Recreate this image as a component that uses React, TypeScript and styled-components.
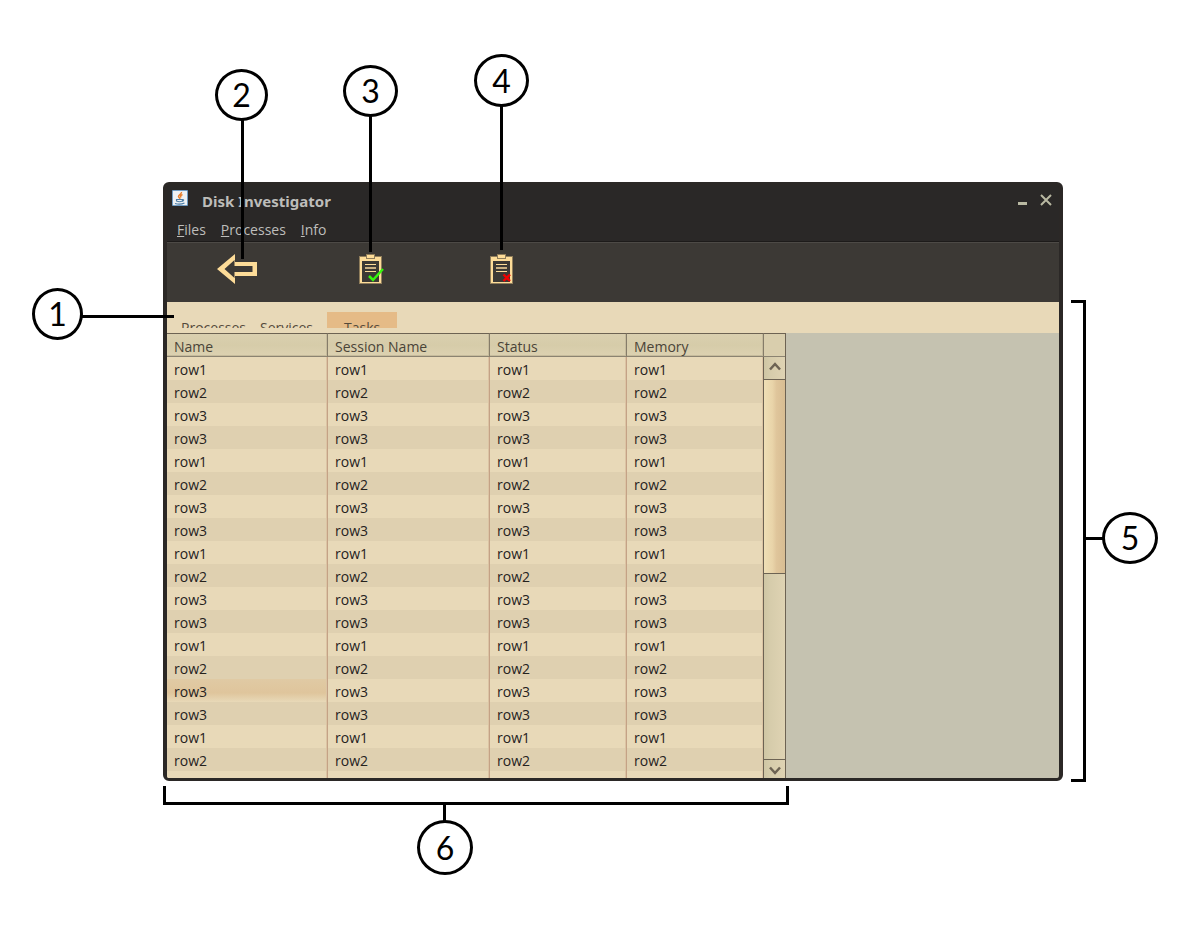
import React from "react";
import styled, { createGlobalStyle, css } from "styled-components";

const Global = createGlobalStyle`
  * { box-sizing: border-box; }
  body {
    margin: 0;
    background: #ffffff;
    font-family: "Open Sans", "Noto Sans", sans-serif;
    font-size: 14px;
    line-height: 20px;
  }
  button {
    margin: 0;
    padding: 0;
    border: 0;
    background: none;
    font: inherit;
    color: inherit;
  }
`;

const Stage = styled.main`
  padding: 182px 141px 167px 163px;
`;

const Figure = styled.div`
  position: relative;
`;

const Frame = styled.section`
  display: flex;
  flex-direction: column;
  border: 4px solid #2b2826;
  border-bottom-width: 3px;
  border-radius: 6px;
  background: #2b2826;
  overflow: hidden;
`;

const TitleBar = styled.header`
  display: flex;
  align-items: center;
  height: 32px;
  padding: 0 6px 0 5px;
  background: #2a2827;
`;

const Title = styled.h1`
  flex: 1;
  margin: 0 0 2px 14px;
  font-family: "Noto Sans", "Open Sans", sans-serif;
  font-size: 15px;
  line-height: 20px;
  font-weight: 700;
  color: #bdbdba;
`;

const JavaMark = styled.svg`
  width: 16px;
  height: 16px;
  margin-bottom: 8px;
`;

const WindowButtons = styled.div`
  display: flex;
  gap: 10px;
  margin-bottom: 4px;
`;

const WindowButton = styled.button`
  display: flex;
  width: 14px;
  height: 14px;
`;

const MenuBar = styled.nav`
  display: flex;
  gap: 15px;
  height: 24px;
  padding: 2px 10px;
  border-bottom: 1px solid #1d1b1a;
  background: #2a2827;
  color: #bebebb;
`;

const MenuButton = styled.button`
  height: 20px;
  line-height: 20px;
`;

const ToolBar = styled.div`
  display: flex;
  align-items: flex-start;
  gap: 102px;
  height: 60px;
  padding: 10px 50px;
  border-top: 1px solid #4d4a46;
  background: #3c3935;
`;

const ToolButton = styled.button`
  display: flex;
`;

const TabStrip = styled.div`
  display: flex;
  height: 31px;
  padding: 10px 7px 5px;
  background: #e8d9b8;
`;

const Tab = styled.button<{ $active?: boolean }>`
  height: 16px;
  padding: 6px 7px 0;
  overflow: hidden;
  line-height: 20px;
  color: #544a3b;
  ${(p) =>
    p.$active &&
    css`
      margin-left: 7px;
      padding: 6px 17px 0;
      background: #e5bb87;
    `}
`;

const Workspace = styled.div`
  display: flex;
  height: 445px;
  background: #c5c2b0;
`;

const TablePane = styled.div`
  flex: none;
  width: 597px;
  overflow: hidden;
  background: #e8d9b8;
`;

const Table = styled.table`
  width: 100%;
  table-layout: fixed;
  border-collapse: separate;
  border-spacing: 0;
`;

const HeadCell = styled.th`
  height: 24px;
  padding: 3px 7px 0;
  border-top: 1px solid #6d6353;
  border-bottom: 1px solid #8b8371;
  border-right: 1px solid #857c69;
  background: linear-gradient(#dacfaf, #d6cca9 50%, #dcd1b1);
  box-shadow: inset -1px -1px #c6bb9c;
  font-weight: 400;
  line-height: 19px;
  text-align: left;
  color: #4a4438;
`;

const Row = styled.tr`
  background: #e8d9b8;
  &:nth-child(even) {
    background: #dfd0b0;
  }
`;

const Cell = styled.td<{ $selected?: boolean }>`
  height: 23px;
  padding: 3px 7px 0;
  border-right: 1px solid #c4a286;
  box-shadow: inset -1px 0 #dcc4a4;
  line-height: 20px;
  color: #25221d;
  ${(p) =>
    p.$selected &&
    css`
      background: linear-gradient(#e0caa4, #dfc59c 60%, #e8d9b8);
    `}
`;

const ScrollColumn = styled.div`
  display: flex;
  flex-direction: column;
  width: 22px;
  border-top: 1px solid #6d6353;
  border-right: 1px solid #6d6353;
  background: #d9cead;
`;

const ScrollCorner = styled.div`
  height: 23px;
  border-bottom: 1px solid #8b8371;
`;

const ScrollBar = styled.div`
  flex: 1;
  display: flex;
  flex-direction: column;
  margin-left: -1px;
  border-left: 1px solid #6d6353;
  background: linear-gradient(to right, #cfc6a4, #d6ccab 30%, #dfd3b3);
`;

const ScrollButton = styled.button<{ $end?: boolean }>`
  display: flex;
  align-items: center;
  justify-content: center;
  height: ${(p) => (p.$end ? "19px" : "23px")};
  padding-top: ${(p) => (p.$end ? "3px" : "0")};
  padding-bottom: ${(p) => (p.$end ? "0" : "3px")};
  border-style: solid;
  border-color: #6d6353;
  border-width: ${(p) => (p.$end ? "1px 0 0" : "0 0 1px")};
`;

const ScrollThumb = styled.div`
  height: 194px;
  border-bottom: 1px solid #6d6353;
  background: linear-gradient(to right, #efdfb6, #e9d4a9 40%, #dfc59b 60%, #d8bd92);
`;

const ScrollTrack = styled.div`
  flex: 1;
`;

/* Numbered callouts lie over the window and are anchored to its edges. */
const calloutPart = css<{ $x?: number; $right?: number; $y: number; $w: number; $h: number }>`
  position: absolute;
  top: ${(p) => p.$y}px;
  ${(p) => (p.$right !== undefined ? `right: ${p.$right}px;` : `left: ${p.$x}px;`)}
  width: ${(p) => p.$w}px;
  height: ${(p) => p.$h}px;
`;

const Bubble = styled.span`
  ${calloutPart}
  display: flex;
  align-items: center;
  justify-content: center;
  border: 3px solid #000000;
  border-radius: 50%;
  font-family: Lato, "Open Sans", sans-serif;
  font-size: 32px;
  line-height: 40px;
  color: #000000;
`;

const Leader = styled.span`
  ${calloutPart}
  background: #000000;
`;

const Bracket = styled.span<{ $side: "right" | "bottom" }>`
  ${calloutPart}
  border: 3px solid #000000;
  ${(p) => (p.$side === "right" ? "border-left: 0;" : "border-top: 0;")}
`;

const columns = [
  { label: "Name", width: 161 },
  { label: "Session Name", width: 162 },
  { label: "Status", width: 137 },
  { label: "Memory", width: 137 },
];
const cycle = ["row1", "row2", "row3", "row3"];
const rows = Array.from({ length: 19 }, (_, i) => cycle[i % 4]);
const selectedRow = 14;
const menus = ["Files", "Processes", "Info"];

function Clipboard({ children }: { children: React.ReactNode }) {
  return (
    <svg width="29" height="32" viewBox="0 0 29 32" aria-hidden="true">
      <rect x="0.5" y="3.5" width="22" height="27" fill="#fddc98" stroke="#8f7d5b" />
      <rect x="3" y="8" width="17" height="21" fill="#3c3935" />
      <rect x="7.5" y="1.5" width="8" height="4" fill="#fddc98" stroke="#8f7d5b" />
      <path d="M6 11.500h11M6 18.500h11" stroke="#fddc98" strokeWidth="1" />
      <path d="M6 15h11" stroke="#c9b083" strokeWidth="2" />
      {children}
    </svg>
  );
}

export default function App() {
  return (
    <>
      <Global />
      <Stage>
        <Figure>
          <Frame>
            <TitleBar>
              <JavaMark viewBox="0 0 16 16" aria-hidden="true">
                <rect width="16" height="16" rx="1" fill="#6f9cc4" />
                <rect x="1" y="1" width="14" height="14" fill="#edf1f4" />
                <path d="M9.5 2C10 4 6 5 6.500 6.500C6.700 7.500 8 8 7.800 9M10.500 4.500C8 5.500 8.500 6.500 9 7.500" fill="none" stroke="#e8802f" strokeWidth="1.500" />
                <path d="M4.500 9.500h6v1.500q-3 1.500-6 0zM10.500 9.500q2.500 0 0 2M3 13.500q5 1.500 9.500-.5" fill="none" stroke="#4c7da6" strokeWidth="1.100" />
              </JavaMark>
              <Title>Disk Investigator</Title>
              <WindowButtons>
                <WindowButton aria-label="Minimise">
                  <svg width="14" height="14" viewBox="0 0 14 14">
                    <rect x="3" y="9" width="9" height="3" fill="#b9b9a2" />
                  </svg>
                </WindowButton>
                <WindowButton aria-label="Close">
                  <svg width="14" height="14" viewBox="0 0 14 14">
                    <path d="M2 2L12 12M12 2L2 12" stroke="#b9b9a2" strokeWidth="2" />
                  </svg>
                </WindowButton>
              </WindowButtons>
            </TitleBar>
            <MenuBar>
              {menus.map((m) => (
                <MenuButton key={m}>
                  <u>{m[0]}</u>
                  {m.slice(1)}
                </MenuButton>
              ))}
            </MenuBar>
            <ToolBar>
              <ToolButton aria-label="Back">
                <svg width="40" height="32" viewBox="0 0 40 32">
                  <path
                    d="M0 16L18 1V9H40V23H18V31ZM7.500 16L17.500 25V19H35.500V13H17.500V7Z"
                    fill="#fddc98"
                    fillRule="evenodd"
                  />
                </svg>
              </ToolButton>
              <ToolButton aria-label="Accept task">
                <Clipboard>
                  <path d="M10 23L14 27L24 16" fill="none" stroke="#35f50c" strokeWidth="2.500" />
                </Clipboard>
              </ToolButton>
              <ToolButton aria-label="End task">
                <Clipboard>
                  <path d="M13.500 21.500L20 28M20 21.500L13.500 28" stroke="#f20000" strokeWidth="2.400" />
                </Clipboard>
              </ToolButton>
            </ToolBar>
            <TabStrip role="tablist">
              <Tab role="tab">Processes</Tab>
              <Tab role="tab">Services</Tab>
              <Tab role="tab" aria-selected="true" $active>
                Tasks
              </Tab>
            </TabStrip>
            <Workspace>
              <TablePane>
                <Table>
                  <colgroup>
                    {columns.map((c) => (
                      <col key={c.label} width={c.width} />
                    ))}
                  </colgroup>
                  <thead>
                    <tr>
                      {columns.map((c) => (
                        <HeadCell key={c.label} scope="col">
                          {c.label}
                        </HeadCell>
                      ))}
                    </tr>
                  </thead>
                  <tbody>
                    {rows.map((text, i) => (
                      <Row key={i}>
                        {columns.map((c, j) => (
                          <Cell key={c.label} $selected={i === selectedRow && j === 0}>
                            {text}
                          </Cell>
                        ))}
                      </Row>
                    ))}
                  </tbody>
                </Table>
              </TablePane>
              <ScrollColumn>
                <ScrollCorner />
                <ScrollBar>
                  <ScrollButton aria-label="Scroll up">
                    <svg width="12" height="9" viewBox="0 0 12 9">
                      <path d="M1 7.500L6 2L11 7.500" fill="none" stroke="#6d6353" strokeWidth="2.500" />
                    </svg>
                  </ScrollButton>
                  <ScrollThumb />
                  <ScrollTrack />
                  <ScrollButton aria-label="Scroll down" $end>
                    <svg width="12" height="9" viewBox="0 0 12 9">
                      <path d="M1 1.500L6 7L11 1.500" fill="none" stroke="#6d6353" strokeWidth="2.500" />
                    </svg>
                  </ScrollButton>
                </ScrollBar>
              </ScrollColumn>
            </Workspace>
          </Frame>

          <Leader $x={-81} $y={133} $w={92} $h={3} />
          <Bubble $x={-131} $y={106} $w={51} $h={52}>1</Bubble>
          <Leader $x={78} $y={-63} $w={3} $h={140} />
          <Bubble $x={52} $y={-113} $w={53} $h={52}>2</Bubble>
          <Leader $x={206} $y={-68} $w={3} $h={138} />
          <Bubble $x={180} $y={-117} $w={55} $h={52}>3</Bubble>
          <Leader $x={337} $y={-77} $w={3} $h={145} />
          <Bubble $x={311} $y={-128} $w={55} $h={53}>4</Bubble>
          <Bracket $side="right" $right={-23} $y={118} $w={15} $h={482} />
          <Leader $right={-41} $y={355} $w={18} $h={3} />
          <Bubble $right={-95} $y={330} $w={56} $h={52}>5</Bubble>
          <Bracket $side="bottom" $x={0} $y={604} $w={626} $h={19} />
          <Leader $x={280} $y={622} $w={3} $h={18} />
          <Bubble $x={254} $y={638} $w={56} $h={55}>6</Bubble>
        </Figure>
      </Stage>
    </>
  );
}
